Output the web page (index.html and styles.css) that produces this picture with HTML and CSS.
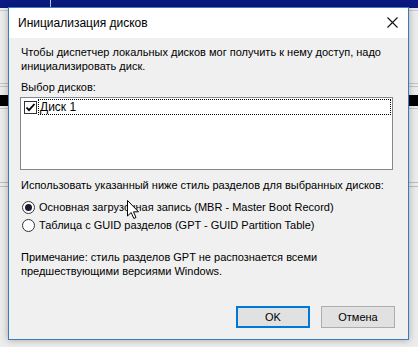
FILE: index.html
```html
<!DOCTYPE html>
<html lang="ru">
<head>
    <meta charset="UTF-8">
    <title>Инициализация дисков</title>
    <link rel="stylesheet" href="styles.css">
</head>
<body>

<div class="desktop">
    <div class="dialog">
        <div class="titlebar">
            <span class="title">Инициализация дисков</span>
            <svg class="close" width="11" height="11" viewBox="0 0 11 11">
                <path d="M0.5 0.5 L10.5 10.5 M10.5 0.5 L0.5 10.5" stroke="#111" stroke-width="1.1" fill="none"/>
            </svg>
        </div>

        <div class="content">
            <p class="intro">Чтобы диспетчер локальных дисков мог получить к нему доступ, надо<br>инициализировать диск.</p>

            <p class="label">Выбор дисков:</p>
            <div class="listbox">
                <div class="list-item">
                    <span class="checkbox">
                        <svg width="11" height="11" viewBox="0 0 11 11">
                            <path d="M1.5 5.5 L4 8.2 L9.5 2" stroke="#000" stroke-width="1.8" fill="none"/>
                        </svg>
                    </span>
                    <span class="item-text">Диск 1</span>
                </div>
            </div>

            <p class="label label-style">Использовать указанный ниже стиль разделов для выбранных дисков:</p>
            <div class="radios">
                <div class="radio"><span class="radio-circle checked"></span>Основная загрузочная запись (MBR - Master Boot Record)</div>
                <div class="radio"><span class="radio-circle"></span>Таблица с GUID разделов (GPT - GUID Partition Table)</div>
            </div>

            <p class="note">Примечание: стиль разделов GPT не распознается всеми<br>предшествующими версиями Windows.</p>

            <div class="buttons">
                <button class="btn btn-default">OK</button>
                <button class="btn">Отмена</button>
            </div>
        </div>
    </div>

    <!-- mouse pointer over the first option -->
    <svg class="pointer" width="13" height="20" viewBox="0 0 13 20">
        <path d="M0.5 0.5 L0.5 16 L4.2 12.5 L6.8 18.5 L9 17.5 L6.5 11.8 L11.5 11.8 Z" fill="#fff" stroke="#000" stroke-width="1"/>
    </svg>
</div>

</body>
</html>
```

FILE: styles.css
```css
* {
    margin: 0;
    padding: 0;
    box-sizing: border-box;
}

body {
    width: 418px;
    height: 347px;
    overflow: hidden;
    font-family: "Liberation Sans", Arial, sans-serif;
    font-size: 11px;
    color: #000;
    background-color: #ececec;
}

.desktop {
    position: relative;
    width: 418px;
    height: 347px;
    padding: 7px 0 0 8px;
    background:
        linear-gradient(90deg, transparent 50px, #c8cde0 50px, #c8cde0 51px, transparent 51px) 0 0 / 100% 8px no-repeat,
        linear-gradient(#0a1a82, #0a1a82) 0 0 / 100% 8px no-repeat,
        linear-gradient(transparent 10px, #c9c9c9 10px, #c9c9c9 11px, transparent 11px,
                        transparent 83px, #c4c4c4 83px, #c4c4c4 84px, transparent 84px,
                        transparent 86px, #c4c4c4 86px, #c4c4c4 87px, transparent 87px,
                        transparent 95px, #000 95px, #000 106px, transparent 106px,
                        transparent 108px, #c4c4c4 108px, #c4c4c4 109px, transparent 109px,
                        transparent 182px, #bdbdbd 182px, #bdbdbd 183px, transparent 183px,
                        transparent 186px, #bdbdbd 186px, #bdbdbd 187px, transparent 187px),
        #ececec;
}

.dialog {
    width: 401px;
    height: 333px;
    border: 1px solid #3a7cbf;
    background-color: #f0f0f0;
    box-shadow: 0 0 7px rgba(0, 0, 0, 0.3);
    display: flex;
    flex-direction: column;
}

.titlebar {
    height: 30px;
    background-color: #fff;
    display: flex;
    align-items: center;
    justify-content: space-between;
    padding: 0 10px 1px 9px;
}

.title {
    font-size: 12px;
}

.close {
    display: block;
    margin-right: 0;
}

.content {
    flex: 1;
    display: flex;
    flex-direction: column;
    padding: 7px 13px 10px 12px;
    line-height: 14px;
}

.label {
    margin-top: 7px;
}

.listbox {
    height: 73px;
    margin: 3px 2px 0 -1px;
    background-color: #fff;
    border: 1px solid #828790;
    padding: 1px 1px 0 1px;
}

.list-item {
    display: flex;
    align-items: center;
    height: 16px;
}

.checkbox {
    width: 13px;
    height: 13px;
    margin-left: 2px;
    border: 1px solid #333;
    background-color: #fff;
    display: flex;
    align-items: center;
    justify-content: center;
}

.checkbox svg {
    display: block;
}

.item-text {
    flex: 1;
    height: 16px;
    margin-left: 1px;
    padding-left: 1px;
    line-height: 15px;
    border: 1px dotted #000;
    font-size: 12px;
}

.label-style {
    margin-top: 8px;
}

.radios {
    margin-top: 6px;
}

.radio {
    display: flex;
    align-items: center;
    height: 18px;
    padding-left: 1px;
}

.radio-circle {
    width: 13px;
    height: 13px;
    margin-right: 4px;
    border: 1px solid #333;
    border-radius: 50%;
    background-color: #fff;
    display: flex;
    align-items: center;
    justify-content: center;
}

.radio-circle.checked::after {
    content: "";
    width: 7px;
    height: 7px;
    border-radius: 50%;
    background-color: #1a1a2e;
}

.note {
    margin-top: 16px;
}

.buttons {
    margin-top: auto;
    display: flex;
    justify-content: flex-end;
    gap: 11px;
    padding-bottom: 1px;
}

.btn {
    width: 74px;
    height: 22px;
    font-family: "Liberation Sans", Arial, sans-serif;
    font-size: 11px;
    color: #000;
    background-color: #e1e1e1;
    border: 1px solid #adadad;
}

.btn-default {
    border: 2px solid #0078d7;
}

.pointer {
    position: absolute;
    left: 127px;
    top: 200px;
}
```
